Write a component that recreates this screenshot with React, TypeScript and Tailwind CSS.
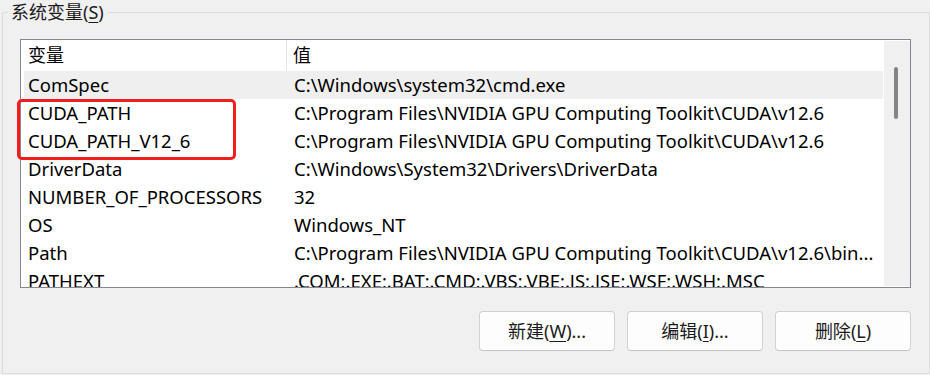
import React from "react";

const rows: [string, string][] = [
  ["ComSpec", "C:\\Windows\\system32\\cmd.exe"],
  ["CUDA_PATH", "C:\\Program Files\\NVIDIA GPU Computing Toolkit\\CUDA\\v12.6"],
  ["CUDA_PATH_V12_6", "C:\\Program Files\\NVIDIA GPU Computing Toolkit\\CUDA\\v12.6"],
  ["DriverData", "C:\\Windows\\System32\\Drivers\\DriverData"],
  ["NUMBER_OF_PROCESSORS", "32"],
  ["OS", "Windows_NT"],
  ["Path", "C:\\Program Files\\NVIDIA GPU Computing Toolkit\\CUDA\\v12.6\\bin..."],
  ["PATHEXT", ".COM;.EXE;.BAT;.CMD;.VBS;.VBE;.JS;.JSE;.WSF;.WSH;.MSC"],
];

const font = {
  fontFamily: '"Noto Sans", "Noto Sans CJK SC", sans-serif',
};

function Btn({ pre, k, post }: { pre: string; k: string; post: string }) {
  return (
    <button className="w-[136px] h-[40px] rounded-[4px] border border-[#d0d0d0] border-b-[#c4c4c4] bg-[#fdfdfd] text-[18px] leading-[24px] text-[#1b1b1b] flex items-center justify-center">
      {pre}(<span className="underline underline-offset-[3px]">{k}</span>){post}
    </button>
  );
}

export default function App() {
  return (
    <div className="w-[930px] h-[375px] bg-[#f0f0f0] overflow-hidden text-black" style={font}>
      <fieldset className="ml-[2px] w-[928px] h-[374px] border border-[#dcdcdc] flex flex-col">
        <legend className="ml-[5px] px-[3px] text-[18px] leading-[24px] text-[#1a1a1a]">
          系统变量(<span className="underline underline-offset-[3px]">S</span>)
        </legend>
        <div className="relative mt-[15px] ml-[17px] w-[891px] h-[249px] border border-[#828790] bg-white flex">
          <div className="flex-1 overflow-hidden">
            <div className="h-[31px] flex text-[18px] leading-[31px]">
              <div className="w-[266px] pl-[7px] border-r border-[#e5e5e5]">变量</div>
              <div className="pl-[6px]">值</div>
            </div>
            {rows.map(([n, v], i) => (
              <div
                key={n}
                className={
                  "h-[28px] flex text-[18.5px] leading-[28px] whitespace-nowrap ml-[3px] " +
                  (i === 0 ? "bg-[#efefef]" : "")
                }
              >
                <div className="w-[263px] pl-[4px]">{n}</div>
                <div className="pl-[7px]">{v}</div>
              </div>
            ))}
          </div>
          <div className="w-[26px] ml-[1px] my-[1px] bg-[#f0f0f0] pt-[26px] flex justify-center">
            <div className="ml-[-2px] w-[4px] h-[52px] rounded-[2px] bg-[#858585]" />
          </div>
          <div className="absolute left-[-4px] top-[59px] w-[219px] h-[61px] border-[3px] border-[#f01e1e] rounded-[5px]" />
        </div>
        <div className="mt-[23px] mr-[18px] flex justify-end gap-[12px]">
          <Btn pre="新建" k="W" post="..." />
          <Btn pre="编辑" k="I" post="..." />
          <Btn pre="删除" k="L" post="" />
        </div>
      </fieldset>
    </div>
  );
}
